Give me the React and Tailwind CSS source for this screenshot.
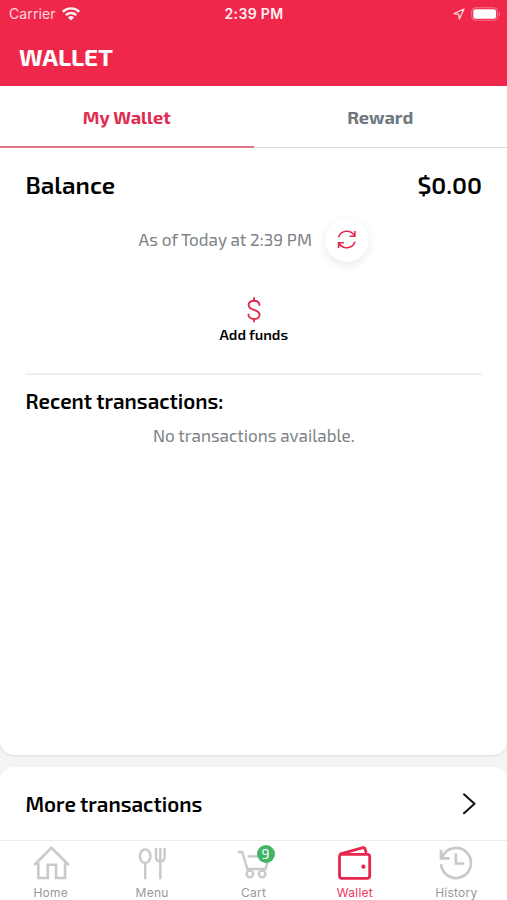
import React from "react";

const display = "font-['Exo_2','Noto_Sans','Open_Sans',sans-serif]";
const system = "font-['Inter','Liberation_Sans',sans-serif]";

function StatusBar() {
  return (
    <div className={`${system} grid h-7 grid-cols-3 items-center pl-[9px] pr-[6px] text-[14px] leading-none text-[#fff0f3]`}>
      <div className="flex items-center gap-[6px]">
        <span className="text-[#ffd9df] tracking-[0.1px]">Carrier</span>
        <svg width="18" height="14" viewBox="0 0 18 14" fill="none" stroke="currentColor" strokeWidth="2.4">
          <path d="M.8 4.8a11.6 11.6 0 0 1 16.400 0" />
          <path d="M3.800 8.100a7.400 7.400 0 0 1 10.400 0" />
          <path d="M9 13.6 6 10.500a4.300 4.300 0 0 1 6 0Z" fill="currentColor" stroke="none" />
        </svg>
      </div>
      <div className="whitespace-nowrap pr-[2px] text-center font-semibold tracking-[0.35px]">2:39 PM</div>
      <div className="flex items-center justify-end gap-[6px]">
        <svg width="12" height="12" viewBox="0 0 12 12" fill="none" stroke="#ffd2da" strokeWidth="1.3" strokeLinejoin="round">
          <path d="M11 1 1 5.6l4.7.7.7 4.7Z" />
        </svg>
        <svg width="30" height="14" viewBox="0 0 30 14" fill="none">
          <rect x=".7" y=".7" width="26" height="12.6" rx="3.8" stroke="#f7738a" strokeWidth="1" />
          <rect x="2.3" y="2.3" width="22.8" height="9.4" rx="2.2" fill="#fff" />
          <path d="M28 4.8c1.7.8 1.7 3.6 0 4.4Z" fill="#f7738a" />
        </svg>
      </div>
    </div>
  );
}

function NavItem({ label, active, children }) {
  return (
    <div className={`flex flex-1 flex-col items-center pt-[3px] ${active ? "text-[#e7264c]" : "text-[#c9c9c9]"}`}>
      <div className="relative h-[40px] w-[40px]">{children}</div>
      <span className={`${system} mt-[2px] text-[12px] leading-[14px] tracking-[0.25px] ${active ? "text-[#e7365a]" : "text-[#999]"}`}>{label}</span>
    </div>
  );
}

function Glyph({ children, width = 2 }) {
  return (
    <svg width="40" height="40" viewBox="0 0 40 40" fill="none" stroke="currentColor" strokeWidth={width}>
      {children}
    </svg>
  );
}

export default function App() {
  return (
    <div className={`${display} flex h-[900px] w-[507px] flex-col overflow-hidden bg-[#f4f4f4] text-black`}>
      <header className="h-[86px] shrink-0 bg-[#ef284b]">
        <StatusBar />
        <h1 className="pl-[19px] pt-[13px] text-[24.3px] font-bold leading-[32px] text-white">WALLET</h1>
      </header>

      <main className="flex h-[669px] shrink-0 flex-col rounded-b-[14px] bg-white shadow-[0_1px_3px_rgba(0,0,0,0.1)]">
        <div className="flex h-[62px] shrink-0 text-[18.2px] font-bold">
          <div className="flex flex-1 items-center justify-center border-b-2 border-[#e27585] pt-[4px] text-[#e02b50]">
            <span>My Wallet</span>
          </div>
          <div className="flex flex-1 items-center justify-center border-b border-[#dedede] pt-[3px] text-[#6d777d]">
            <span>Reward</span>
          </div>
        </div>

        <div className="flex flex-col pl-[25.5px] pr-[25px]">
          <div className="flex h-[74px] items-center justify-between text-[24.2px] font-semibold">
            <span>Balance</span>
            <span>$0.00</span>
          </div>
          <div className="-mt-[4px] flex h-[44px] items-center justify-center gap-[13px]">
            <span className="text-[17.1px] text-[#7d8286]">As of Today at 2:39 PM</span>
            <div className="flex h-[44px] w-[44px] items-center justify-center rounded-full bg-white shadow-[0_3px_8px_rgba(0,0,0,0.09)]">
              <svg width="20" height="20" viewBox="0 0 20 20" fill="none" stroke="#e02b50" strokeWidth="1.6">
                <path d="M1.5 7.200C4 .2 13 -.9 17.300 5.200M17.900 1v5.200h-5.300M18 11.800C15.500 18.800 6.500 19.900 2.200 13.800M1.600 18v-5.200h5.300" />
              </svg>
            </div>
          </div>
          <div className="mt-[35px] flex flex-col items-center">
            <svg width="16" height="26" viewBox="0 0 16 26" fill="none" stroke="#e02b50" strokeWidth="1.9" strokeLinecap="round">
              <path d="M8 1v2.500M8 22v2.500M13.400 8C13.200 5.200 11 3.700 8 3.700S2.600 5.400 2.600 8c0 2.700 2.200 3.900 5.400 4.900s5.600 2.100 5.600 4.800S11 22 8 22s-5.500-1.700-5.600-4.500" />
            </svg>
            <span className="mt-[2px] text-[14.600px] font-semibold leading-[18px]">Add funds</span>
          </div>
          <div className="mt-[30px] h-[2px] bg-[#efefef]" />
          <h2 className="mt-[12px] text-[20.7px] font-semibold leading-[28px]">Recent transactions:</h2>
          <p className="mt-[8px] text-center text-[17.1px] leading-[24px] text-[#7d8286]">No transactions available.</p>
        </div>
      </main>

      <section className="mt-[12px] flex h-[73px] shrink-0 items-center justify-between rounded-t-[14px] bg-white pl-[25.5px] pr-[31px]">
        <span className="text-[20.7px] font-semibold">More transactions</span>
        <svg width="14" height="22" viewBox="0 0 14 22" fill="none" stroke="#111" strokeWidth="2" strokeLinecap="round" strokeLinejoin="round">
          <path d="M2 1.300 12.500 10.800 2 20.300" />
        </svg>
      </section>

      <nav className="flex h-[60px] shrink-0 border-t border-[#ececec] bg-white">
        <NavItem label="Home">
          <Glyph width={2.6}>
            <path d="M3.300 21 20.500 3.800 37.700 21M7.300 19v15h9.500V20.800h8.200V34h9V19" />
          </Glyph>
        </NavItem>
        <NavItem label="Menu">
          <Glyph width={2.4}>
            <ellipse cx="13.200" cy="12.200" rx="5.300" ry="6.800" />
            <path d="M13.200 19v16.300M24 4v9q0 4.500 4.300 4.500t4.300-4.500V4M28.300 4v31.300" />
          </Glyph>
        </NavItem>
        <NavItem label="Cart">
          <Glyph width={2.3}>
            <path d="M3.800 8h4.400l5.200 17h18.200l3-11M13.500 12.300h16" />
            <circle cx="15.800" cy="30" r="3.300" />
            <circle cx="28.200" cy="30" r="3.300" />
          </Glyph>
          <span className="absolute left-[23px] top-[1px] flex h-[18px] w-[18px] items-center justify-center rounded-full bg-[#43b566] text-[14px] leading-none text-white">9</span>
        </NavItem>
        <NavItem label="Wallet" active>
          <Glyph width={2.8}>
            <rect x="4.500" y="10.300" width="30.200" height="24" rx="2.500" />
            <path d="m5.500 9.800 22.500-6.100q1.600-.4 2 1l.9 3.300" strokeLinecap="round" />
            <circle cx="28.400" cy="22.700" r="2.100" fill="currentColor" stroke="none" />
          </Glyph>
        </NavItem>
        <NavItem label="History">
          <Glyph width={2.7}>
            <path d="M6 13.500A15 15 0 1 1 5 20.200M5 5.800v8.500h8.500M19.900 9.300v10.200h8.200" />
          </Glyph>
        </NavItem>
      </nav>
    </div>
  );
}
